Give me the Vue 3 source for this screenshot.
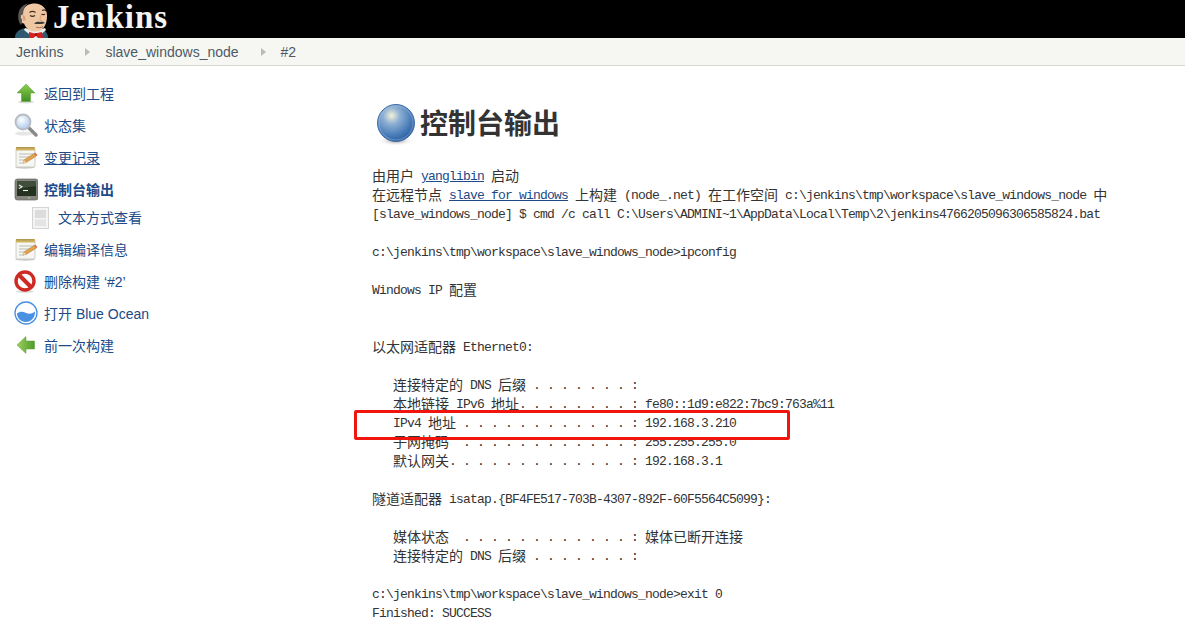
<script setup>
const sideItems = [
  { icon: 'up', text: '返回到工程' },
  { icon: 'search', text: '状态集' },
  { icon: 'note', text: '变更记录', hover: true },
  { icon: 'term', text: '控制台输出', active: true },
  { icon: 'doc', text: '文本方式查看', sub: true },
  { icon: 'note', text: '编辑编译信息' },
  { icon: 'stop', text: '删除构建 ‘#2’' },
  { icon: 'ocean', text: '打开 Blue Ocean' },
  { icon: 'left', text: '前一次构建' },
]

const raw = [
  '由用户 [[yanglibin]] 启动',
  '在远程节点 [[slave for windows]] 上构建 (node_.net) 在工作空间 c:\\jenkins\\tmp\\workspace\\slave_windows_node 中',
  '[slave_windows_node] $ cmd /c call C:\\Users\\ADMINI~1\\AppData\\Local\\Temp\\2\\jenkins4766205096306585824.bat',
  '',
  'c:\\jenkins\\tmp\\workspace\\slave_windows_node>ipconfig',
  '',
  'Windows IP 配置',
  '',
  '',
  '以太网适配器 Ethernet0:',
  '',
  '   连接特定的 DNS 后缀 . . . . . . . :',
  '   本地链接 IPv6 地址. . . . . . . . : fe80::1d9:e822:7bc9:763a%11',
  '   IPv4 地址 . . . . . . . . . . . . : 192.168.3.210',
  '   子网掩码  . . . . . . . . . . . . : 255.255.255.0',
  '   默认网关. . . . . . . . . . . . . : 192.168.3.1',
  '',
  '隧道适配器 isatap.{BF4FE517-703B-4307-892F-60F5564C5099}:',
  '',
  '   媒体状态  . . . . . . . . . . . . : 媒体已断开连接',
  '   连接特定的 DNS 后缀 . . . . . . . :',
  '',
  'c:\\jenkins\\tmp\\workspace\\slave_windows_node>exit 0',
  'Finished: SUCCESS',
]

const lines = raw.map((line) =>
  line
    .split(/(\[\[.*?\]\]|[\u4e00-\u9fff]+)/)
    .filter(Boolean)
    .map((t) => {
      if (t.startsWith('[[')) return { text: t.slice(2, -2), kind: 'link' }
      if (/[\u4e00-\u9fff]/.test(t)) return { text: t, kind: 'cjk' }
      return { text: t, kind: 'latin' }
    })
)
</script>

<template>
  <div class="page">
    <header class="topbar">
      <svg class="butler" width="36" height="38" viewBox="0 0 36 38">
        <path d="M1 38c0-5 3-8 8-9.500l17 0c5 1.500 8 4.500 8 9.500z" fill="#2f5a6f" />
        <path d="M11 28l11 3 9-3 1 2-9 8h-3l-10-8z" fill="#ecece8" />
        <path d="M15 32l6 1.500 7-1.500 1 6H25l-3-2-3 2h-4z" fill="#d8201f" />
        <circle cx="22" cy="34.500" r="1.600" fill="#a8120f" />
        <path d="M8 12C10 6 15 3.500 21 3.500c7 0 12 5 12 12 0 3-.3 5-1 7.500-1.500 5-5.500 8.500-11 8.500-5.500 0-9-3.500-11-8-2 0-4-2-4-5 0-2 1-3 2-6.500z" fill="#efc7a2" />
        <path d="M7 25C4 22 3 14 6 9c2-3 5-5 8-5.500-3.500 3-5 7-5 11-2.500 0-3 2.500-1 5 0 2 0 4-1 5.500z" fill="#5a5854" />
        <path d="M8.500 15c2 0 3 2 3 5l-2 1z" fill="#d79f80" />
        <path d="M15.500 12.500c2-1.500 4-1.500 6 0M28 10.500c1.500-.8 3-.6 4 .5" stroke="#4a3226" stroke-width="1.200" fill="none" />
        <path d="M16 15.500c1.500 1 3.500 1 5 0M27.500 14c1.200.8 2.500.8 3.500 0" stroke="#3b2a22" stroke-width="1.100" fill="none" />
        <path d="M20 23.500c2-1.800 4-2.300 6-1.500 1.500-.7 4-.3 5 1-2.500 1-3.500 1-5.500 1-2 0-3.500.2-5.500-.5z" fill="#3d3a38" />
        <path d="M22 27c2 1 5 1 7-.5" stroke="#9a6a52" stroke-width="1" fill="none" />
        <path d="M27 15c-.5 2-1 3.500-1 5 1 .7 2 .7 2.500 0" stroke="#cf9c7c" stroke-width=".9" fill="none" />
      </svg>
      <span class="brand">Jenkins</span>
    </header>

    <nav class="crumbs">
      <span>Jenkins</span>
      <i class="caret"></i>
      <span>slave_windows_node</span>
      <i class="caret"></i>
      <span>#2</span>
    </nav>

    <div class="body">
      <aside class="side">
        <div
          v-for="item in sideItems"
          :key="item.text"
          class="row"
          :class="{ sub: item.sub, active: item.active, hover: item.hover }"
        >
          <svg class="ico" width="24" height="24" viewBox="0 0 24 24">
            <template v-if="item.icon === 'up'">
              <defs>
                <linearGradient id="gUp" x1="0" y1="0" x2="0" y2="1">
                  <stop offset="0" stop-color="#8ed04c" />
                  <stop offset="1" stop-color="#3f8f22" />
                </linearGradient>
              </defs>
              <ellipse cx="12" cy="21" rx="8" ry="1.500" fill="#ddd" />
              <path d="M12 3l9 9h-4.500v8.500h-9V12H3z" fill="url(#gUp)" stroke="#5a9e3a" stroke-width=".5" />
            </template>

            <template v-else-if="item.icon === 'search'">
              <defs>
                <radialGradient id="gLens" cx=".4" cy=".35" r=".7">
                  <stop offset="0" stop-color="#ffffff" />
                  <stop offset="1" stop-color="#a7c6ea" />
                </radialGradient>
              </defs>
              <ellipse cx="10" cy="20.500" rx="9" ry="2" fill="#e6e6e6" />
              <path d="M15 15l7 7" stroke="#8a8a8a" stroke-width="3.400" stroke-linecap="round" />
              <circle cx="9" cy="9" r="7.500" fill="url(#gLens)" stroke="#b8bcc2" stroke-width="1.800" />
            </template>

            <template v-else-if="item.icon === 'note'">
              <ellipse cx="11" cy="22.500" rx="10" ry="1.200" fill="#ccc" />
              <rect x="2" y="3" width="19" height="19" rx="1" fill="#f6f6f2" stroke="#c4c4bc" stroke-width=".8" />
              <rect x="2" y="2" width="19" height="3.500" fill="#cfb565" />
              <path d="M3 2v1.500M5 2v1.500M7 2v1.500M9 2v1.500M11 2v1.500M13 2v1.500M15 2v1.500M17 2v1.500M19 2v1.500" stroke="#8a7232" stroke-width=".8" />
              <path d="M5 9h14M5 12h11M5 15h7M5 18h5" stroke="#bdbdb6" stroke-width="1" />
              <path d="M9 18l1-3L20 8.500l2.500 2.500L12 17.500z" fill="#e3a24a" stroke="#a87a38" stroke-width=".5" />
              <path d="M9 18l1-3 2 2.500z" fill="#f3d9a8" />
              <path d="M20 8.500l2.500 2.500 1-1-2.500-2.500z" fill="#cf6a58" />
            </template>

            <template v-else-if="item.icon === 'term'">
              <rect x="1" y="2" width="23" height="21" rx="2.500" fill="#85857e" stroke="#64645e" stroke-width=".7" />
              <rect x="3" y="4" width="19" height="15" fill="#24321f" />
              <path d="M3 4h19v5L3 12z" fill="#3f4f3a" />
              <path d="M5 8l3 1.800-3 1.800" stroke="#f2f2f2" stroke-width="1.100" fill="none" />
              <path d="M9 13.500h5" stroke="#f2f2f2" stroke-width="1.100" />
              <circle cx="15" cy="21" r=".8" fill="#b9e29a" />
            </template>

            <template v-else-if="item.icon === 'doc'">
              <rect x="2.500" y="2.500" width="16" height="21" fill="#f4f4f4" stroke="#d4d4d4" />
              <rect x="5" y="5" width="11" height="8" fill="#dcdcdc" />
              <rect x="5" y="14.500" width="11" height="6.500" fill="#e4e4e4" />
            </template>

            <template v-else-if="item.icon === 'stop'">
              <ellipse cx="11" cy="22.500" rx="9" ry="1.300" fill="#ddd" />
              <circle cx="11" cy="12" r="9" fill="#fdfdfd" stroke="#cc2a22" stroke-width="3.400" />
              <path d="M5 6l12 12" stroke="#cc2a22" stroke-width="4" />
            </template>

            <template v-else-if="item.icon === 'ocean'">
              <circle cx="12" cy="12" r="11" fill="#fff" stroke="#4a90e2" stroke-width="1.300" />
              <path d="M3 12.500c3-2.500 6-2 9-.5 3 1.200 6 1 9-1.500 .3 6-4 10.500-9 10.500-5 0-9-4-9-8.500z" fill="#4a90e2" />
            </template>

            <template v-else-if="item.icon === 'left'">
              <defs>
                <linearGradient id="gLeft" x1="0" y1="0" x2="1" y2="0">
                  <stop offset="0" stop-color="#9cd05c" />
                  <stop offset="1" stop-color="#4e9a2c" />
                </linearGradient>
              </defs>
              <path d="M3 12l9-8.500V8h8.500v8H12v4.500z" fill="url(#gLeft)" stroke="#5a9e3a" stroke-width=".5" />
            </template>
          </svg>
          <span class="label">{{ item.text }}</span>
        </div>
      </aside>

      <main class="main">
        <h1 class="title">
          <svg width="48" height="48" viewBox="0 0 48 48">
            <defs>
              <radialGradient id="gBall" cx=".38" cy=".3" r=".75">
                <stop offset="0" stop-color="#f3f2d8" />
                <stop offset=".3" stop-color="#8fb0d4" />
                <stop offset=".7" stop-color="#4a7db8" />
                <stop offset="1" stop-color="#265a9c" />
              </radialGradient>
              <radialGradient id="gShade" cx=".5" cy=".5" r=".5">
                <stop offset="0" stop-color="#999" />
                <stop offset="1" stop-color="#fff" stop-opacity="0" />
              </radialGradient>
            </defs>
            <ellipse cx="24" cy="43" rx="19" ry="5" fill="url(#gShade)" />
            <circle cx="24" cy="25" r="18.500" fill="url(#gBall)" stroke="#3f6ea8" stroke-width="1" />
            <circle cx="24" cy="25" r="17" fill="none" stroke="#b8cfe6" stroke-width=".6" opacity=".7" />
          </svg>
          <span>控制台输出</span>
        </h1>

        <div class="console">
          <div v-for="(line, i) in lines" :key="i" class="line">
            <template v-for="(seg, j) in line" :key="j">
              <a v-if="seg.kind === 'link'" class="link">{{ seg.text }}</a>
              <span v-else :class="seg.kind">{{ seg.text }}</span>
            </template>
          </div>
          <div class="redbox"></div>
        </div>
      </main>
    </div>
  </div>
</template>

<style scoped>
.page {
  font-family: "Liberation Sans", "Noto Sans CJK SC", sans-serif;
  font-size: 14px;
  color: #333;
  background: #fff;
  min-height: 636px;
}

.topbar {
  height: 38px;
  background: #000;
  display: flex;
  align-items: flex-start;
  padding-left: 14px;
  overflow: hidden;
}

.butler {
  flex: none;
}

.brand {
  margin-left: 3px;
  font-family: "Liberation Serif", serif;
  font-weight: 700;
  font-size: 33px;
  line-height: 34px;
  letter-spacing: 1px;
  color: #f4f4f4;
}

.crumbs {
  height: 27px;
  background: #f6f7f2;
  border-bottom: 1px solid #d8d8d4;
  display: flex;
  align-items: center;
  padding-left: 16px;
  color: #4d5a66;
}

.caret {
  width: 0;
  height: 0;
  margin: 1px 15px 0 22px;
  border-left: 5px solid #b9bbb6;
  border-top: 4px solid transparent;
  border-bottom: 4px solid transparent;
}

.body {
  display: flex;
}

.side {
  width: 360px;
  flex: none;
  padding-top: 11px;
  color: #204a87;
}

.row {
  height: 32px;
  display: flex;
  align-items: center;
  gap: 6px;
  padding-left: 14px;
}

.row.sub {
  height: 24px;
  margin-bottom: 4px;
  padding-left: 30px;
  gap: 4px;
}

.row.active .label {
  font-weight: 700;
}

.row.hover .label {
  text-decoration: underline;
}

.ico {
  flex: none;
}

.main {
  flex: 1;
  padding: 32px 0 0 12px;
}

.title {
  margin: 0 0 21px;
  height: 48px;
  display: flex;
  align-items: center;
  font-size: 28px;
  font-weight: 700;
  line-height: 48px;
  color: #333;
  font-family: "Noto Sans CJK SC", sans-serif;
}

.console {
  position: relative;
  white-space: pre;
}

.line {
  height: 19px;
  line-height: 19px;
  font-family: "Liberation Mono", "Noto Sans CJK SC", monospace;
  font-size: 13px;
  letter-spacing: -0.8px;
  color: #333;
}

.cjk {
  font-family: "Noto Sans CJK SC", sans-serif;
  font-size: 14px;
  line-height: 0;
  letter-spacing: 0;
  vertical-align: -1px;
}

.link {
  color: #204a87;
  text-decoration: underline;
}

.redbox {
  position: absolute;
  left: -18px;
  top: 243px;
  width: 430px;
  height: 24px;
  border: 3px solid #f0160e;
  border-radius: 2px;
}
</style>
